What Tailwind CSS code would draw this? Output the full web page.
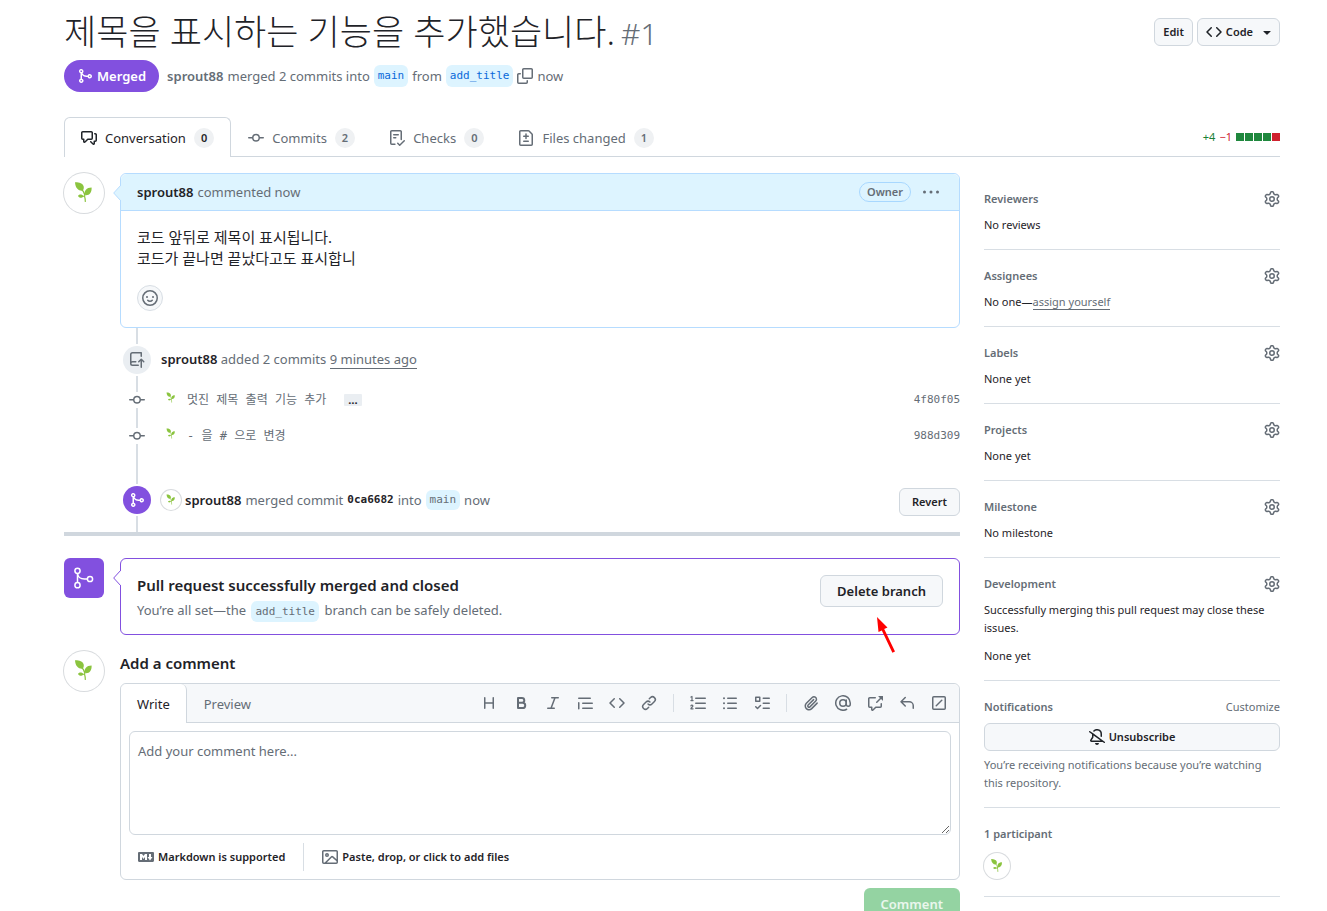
<!DOCTYPE html>
<html lang="ko">
<head>
<meta charset="utf-8">
<meta name="viewport" content="width=device-width, initial-scale=1">
<title>제목을 표시하는 기능을 추가했습니다. #1</title>
<script src="https://cdn.jsdelivr.net/npm/@tailwindcss/browser@4"></script>
</head>
<body class="h-screen overflow-hidden bg-white font-['Noto_Sans','Noto_Sans_CJK_KR',sans-serif] text-[13px] leading-5 text-[#1f2328]">

<!-- Icon sprite -->
<svg class="hidden" aria-hidden="true">
  <symbol id="merge" viewBox="0 0 16 16"><path d="M5.45 5.154A4.25 4.25 0 0 0 9.25 7.5h1.378a2.251 2.251 0 1 1 0 1.5H9.25A5.734 5.734 0 0 1 5 7.123v3.505a2.25 2.25 0 1 1-1.5 0V5.372a2.25 2.25 0 1 1 1.95-.218ZM4.25 13.5a.75.75 0 1 0 0-1.5.75.75 0 0 0 0 1.5Zm8.5-4.5a.75.75 0 1 0 0-1.5.75.75 0 0 0 0 1.5ZM5 3.25a.75.75 0 1 0 0 .005V3.25Z"/></symbol>
  <symbol id="discussion" viewBox="0 0 16 16"><path d="M1.75 1h8.5c.966 0 1.75.784 1.75 1.75v5.5A1.75 1.75 0 0 1 10.25 10H7.061l-2.574 2.573A1.458 1.458 0 0 1 2 11.543V10h-.25A1.75 1.75 0 0 1 0 8.25v-5.5C0 1.784.784 1 1.75 1ZM1.5 2.75v5.5c0 .138.112.25.25.25h1a.75.75 0 0 1 .75.75v2.19l2.72-2.72a.749.749 0 0 1 .53-.22h3.5a.25.25 0 0 0 .25-.25v-5.5a.25.25 0 0 0-.25-.25h-8.5a.25.25 0 0 0-.25.25Zm13 2a.25.25 0 0 0-.25-.25h-.5a.75.75 0 0 1 0-1.5h.5c.966 0 1.75.784 1.75 1.75v5.5A1.75 1.75 0 0 1 14.25 12H14v1.543a1.458 1.458 0 0 1-2.487 1.03L9.22 12.28a.749.749 0 0 1 .326-1.275.749.749 0 0 1 .734.215l2.22 2.22v-2.19a.75.75 0 0 1 .75-.75h1a.25.25 0 0 0 .25-.25Z"/></symbol>
  <symbol id="commit" viewBox="0 0 16 16"><path d="M11.93 8.5a4.002 4.002 0 0 1-7.86 0H.75a.75.75 0 0 1 0-1.5h3.32a4.002 4.002 0 0 1 7.86 0h3.32a.75.75 0 0 1 0 1.5Zm-1.43-.75a2.5 2.5 0 1 0-5 0 2.5 2.5 0 0 0 5 0Z"/></symbol>
  <symbol id="checklist" viewBox="0 0 16 16"><path d="M2.5 1.75v11.5c0 .138.112.25.25.25h3.17a.75.75 0 0 1 0 1.5H2.75A1.75 1.75 0 0 1 1 13.25V1.75C1 .784 1.784 0 2.75 0h8.5C12.216 0 13 .784 13 1.75v7.736a.75.75 0 0 1-1.5 0V1.75a.25.25 0 0 0-.25-.25h-8.5a.25.25 0 0 0-.25.25Zm13.274 9.537v-.001l-4.557 4.45a.75.75 0 0 1-1.055-.008l-1.943-1.95a.75.75 0 0 1 1.062-1.058l1.419 1.425 4.026-3.932a.75.75 0 1 1 1.048 1.074ZM4.75 4h4.5a.75.75 0 0 1 0 1.5h-4.5a.75.75 0 0 1 0-1.5ZM4 7.75A.75.75 0 0 1 4.75 7h2a.75.75 0 0 1 0 1.5h-2A.75.75 0 0 1 4 7.75Z"/></symbol>
  <symbol id="filediff" viewBox="0 0 16 16"><path d="M1 1.75C1 .784 1.784 0 2.75 0h7.586c.464 0 .909.184 1.237.513l2.914 2.914c.329.328.513.773.513 1.237v9.586A1.75 1.75 0 0 1 13.25 16H2.75A1.75 1.75 0 0 1 1 14.25Zm1.75-.25a.25.25 0 0 0-.25.25v12.5c0 .138.112.25.25.25h10.5a.25.25 0 0 0 .25-.25V4.664a.25.25 0 0 0-.073-.177l-2.914-2.914a.25.25 0 0 0-.177-.073ZM8 3.25a.75.75 0 0 1 .75.75v1.5h1.5a.75.75 0 0 1 0 1.5h-1.5v1.5a.75.75 0 0 1-1.5 0V7h-1.5a.75.75 0 0 1 0-1.5h1.5V4A.75.75 0 0 1 8 3.25Zm-3 8a.75.75 0 0 1 .75-.75h4.5a.75.75 0 0 1 0 1.5h-4.5a.75.75 0 0 1-.75-.75Z"/></symbol>
  <symbol id="code" viewBox="0 0 16 16"><path d="m11.28 3.22 4.25 4.25a.75.75 0 0 1 0 1.06l-4.25 4.25a.749.749 0 0 1-1.275-.326.749.749 0 0 1 .215-.734L13.94 8l-3.72-3.72a.749.749 0 0 1 .326-1.275.749.749 0 0 1 .734.215Zm-6.56 0a.751.751 0 0 1 1.042.018.751.751 0 0 1 .018 1.042L2.06 8l3.72 3.72a.749.749 0 0 1-.326 1.275.749.749 0 0 1-.734-.215L.47 8.53a.75.75 0 0 1 0-1.06Z"/></symbol>
  <symbol id="caret" viewBox="0 0 16 16"><path d="m4.427 7.427 3.396 3.396a.25.25 0 0 0 .354 0l3.396-3.396A.25.25 0 0 0 11.396 7H4.604a.25.25 0 0 0-.177.427Z"/></symbol>
  <symbol id="copy" viewBox="0 0 16 16"><path d="M0 6.75C0 5.784.784 5 1.75 5h1.5a.75.75 0 0 1 0 1.5h-1.5a.25.25 0 0 0-.25.25v7.5c0 .138.112.25.25.25h7.5a.25.25 0 0 0 .25-.25v-1.5a.75.75 0 0 1 1.5 0v1.5A1.75 1.75 0 0 1 9.25 16h-7.5A1.75 1.75 0 0 1 0 14.25ZM5 1.75C5 .784 5.784 0 6.75 0h7.5C15.216 0 16 .784 16 1.75v7.5A1.75 1.75 0 0 1 14.25 11h-7.5A1.75 1.75 0 0 1 5 9.25Zm1.75-.25a.25.25 0 0 0-.25.25v7.5c0 .138.112.25.25.25h7.5a.25.25 0 0 0 .25-.25v-7.5a.25.25 0 0 0-.25-.25Z"/></symbol>
  <symbol id="dots" viewBox="0 0 16 16"><circle cx="1.5" cy="8" r="1.5"/><circle cx="8" cy="8" r="1.5"/><circle cx="14.5" cy="8" r="1.5"/></symbol>
  <symbol id="smiley" viewBox="0 0 16 16"><circle cx="8" cy="8" r="7.25" fill="none" stroke="currentColor" stroke-width="1.5"/><circle cx="5" cy="7" r="1"/><circle cx="11" cy="7" r="1"/><path d="M5.75 10.3c1 1.25 3.5 1.25 4.5 0" fill="none" stroke="currentColor" stroke-width="1.5" stroke-linecap="round"/></symbol>
  <symbol id="push" viewBox="0 0 16 16"><path d="M1 2.5A2.5 2.5 0 0 1 3.5 0h8.75a.75.75 0 0 1 .75.75v3.5a.75.75 0 0 1-1.5 0V1.5h-8a1 1 0 0 0-1 1v6.708A2.493 2.493 0 0 1 3.5 9h3.25a.75.75 0 0 1 0 1.5H3.5a1 1 0 0 0 0 2h5.75a.75.75 0 0 1 0 1.5H3.5A2.5 2.5 0 0 1 1 11.5Zm13.23 7.79h-.001l-1.224-1.224v6.184a.75.75 0 0 1-1.5 0V9.066L10.28 10.29a.75.75 0 0 1-1.06-1.061l2.505-2.504a.75.75 0 0 1 1.06 0L15.29 9.23a.751.751 0 0 1-.018 1.042.751.751 0 0 1-1.042.018Z"/></symbol>
  <symbol id="gear" viewBox="0 0 16 16"><path d="M8 0a8.2 8.2 0 0 1 .701.031C9.444.095 9.99.645 10.16 1.29l.288 1.107c.018.066.079.158.212.224.231.114.454.243.668.386.123.082.233.09.299.071l1.103-.303c.644-.176 1.392.021 1.82.63.27.385.506.792.704 1.218.315.675.111 1.422-.364 1.891l-.814.806c-.049.048-.098.147-.088.294.016.257.016.515 0 .772-.01.147.038.246.088.294l.814.806c.475.469.679 1.216.364 1.891a7.977 7.977 0 0 1-.704 1.217c-.428.61-1.176.807-1.82.63l-1.102-.302c-.067-.019-.177-.011-.3.071a5.909 5.909 0 0 1-.668.386c-.133.066-.194.158-.211.224l-.29 1.106c-.168.646-.715 1.196-1.458 1.26a8.006 8.006 0 0 1-1.402 0c-.743-.064-1.289-.614-1.458-1.26l-.289-1.106c-.018-.066-.079-.158-.212-.224a5.738 5.738 0 0 1-.668-.386c-.123-.082-.233-.09-.299-.071l-1.103.303c-.644.176-1.392-.021-1.82-.63a8.12 8.12 0 0 1-.704-1.218c-.315-.675-.111-1.422.363-1.891l.815-.806c.05-.048.098-.147.088-.294a6.214 6.214 0 0 1 0-.772c.01-.147-.038-.246-.088-.294l-.815-.806C.635 6.045.431 5.298.746 4.623a7.92 7.92 0 0 1 .704-1.217c.428-.61 1.176-.807 1.82-.63l1.102.302c.067.019.177.011.3-.071.214-.143.437-.272.668-.386.133-.066.194-.158.211-.224l.29-1.106C6.009.645 6.556.095 7.299.03 7.53.01 7.764 0 8 0Zm-.571 1.525c-.036.003-.108.036-.137.146l-.289 1.105c-.147.561-.549.967-.998 1.189-.173.086-.34.183-.5.29-.417.278-.97.423-1.529.27l-1.103-.303c-.109-.03-.175.016-.195.045-.22.312-.412.644-.573.99-.014.031-.021.11.059.19l.815.806c.411.406.562.957.53 1.456a4.709 4.709 0 0 0 0 .582c.032.499-.119 1.05-.53 1.456l-.815.806c-.081.08-.073.159-.059.19.162.346.353.677.573.989.02.03.085.076.195.046l1.102-.303c.56-.153 1.113-.008 1.53.27.161.107.328.204.501.29.447.222.85.629.997 1.189l.289 1.105c.029.109.101.143.137.146a6.6 6.6 0 0 0 1.142 0c.036-.003.108-.036.137-.146l.289-1.105c.147-.561.549-.967.998-1.189.173-.086.34-.183.5-.29.417-.278.97-.423 1.529-.27l1.103.303c.109.029.175-.016.195-.045.22-.313.411-.644.573-.99.014-.031.021-.11-.059-.19l-.815-.806c-.411-.406-.562-.957-.53-1.456a4.709 4.709 0 0 0 0-.582c-.032-.499.119-1.05.53-1.456l.815-.806c.081-.08.073-.159.059-.19a6.464 6.464 0 0 0-.573-.989c-.02-.03-.085-.076-.195-.046l-1.102.303c-.56.153-1.113.008-1.53-.27a4.44 4.44 0 0 0-.501-.29c-.447-.222-.85-.629-.997-1.189l-.289-1.105c-.029-.11-.101-.143-.137-.146a6.6 6.6 0 0 0-1.142 0ZM11 8a3 3 0 1 1-6 0 3 3 0 0 1 6 0ZM9.5 8a1.5 1.5 0 1 0-3.001.001A1.5 1.5 0 0 0 9.5 8Z"/></symbol>
  <symbol id="heading" viewBox="0 0 16 16"><path d="M3.75 2.75v10.5M12.25 2.75v10.5M3.75 8h8.5" fill="none" stroke="currentColor" stroke-width="1.5" stroke-linecap="round"/></symbol>
  <symbol id="bold" viewBox="0 0 16 16"><path d="M5 3h3.9a2.3 2.3 0 0 1 0 4.75H5Zm0 4.75h4.6a2.6 2.6 0 0 1 0 5.25H5Z" fill="none" stroke="currentColor" stroke-width="2" stroke-linejoin="round"/></symbol>
  <symbol id="italic" viewBox="0 0 16 16"><path d="M6.75 2.75h6.5M2.75 13.25h6.5M10 2.75 6 13.25" fill="none" stroke="currentColor" stroke-width="1.5" stroke-linecap="round"/></symbol>
  <symbol id="quote" viewBox="0 0 16 16"><path d="M1.75 3.25h11.5M5.75 8.25h9.5M5.75 13.25h9.5M1.75 7.75v6" fill="none" stroke="currentColor" stroke-width="1.5" stroke-linecap="round"/></symbol>
  <symbol id="link" viewBox="0 0 16 16"><path d="m7.775 3.275 1.25-1.25a3.5 3.5 0 1 1 4.95 4.95l-2.5 2.5a3.5 3.5 0 0 1-4.95 0 .751.751 0 0 1 .018-1.042.751.751 0 0 1 1.042-.018 1.998 1.998 0 0 0 2.83 0l2.5-2.5a2.002 2.002 0 0 0-2.83-2.83l-1.25 1.25a.751.751 0 0 1-1.042-.018.751.751 0 0 1-.018-1.042Zm-4.69 9.64a1.998 1.998 0 0 0 2.83 0l1.25-1.25a.751.751 0 0 1 1.042.018.751.751 0 0 1 .018 1.042l-1.25 1.25a3.5 3.5 0 1 1-4.95-4.95l2.5-2.5a3.5 3.5 0 0 1 4.95 0 .751.751 0 0 1-.018 1.042.751.751 0 0 1-1.042.018 1.998 1.998 0 0 0-2.83 0l-2.5 2.5a1.998 1.998 0 0 0 0 2.83Z"/></symbol>
  <symbol id="ordered" viewBox="0 0 16 16"><path d="M5.75 3.25h9.5M5.75 8.25h9.5M5.75 13.25h9.5" fill="none" stroke="currentColor" stroke-width="1.5" stroke-linecap="round"/><path d="M1 2.1 2 1.500v4M.9 5.600h2.200M.9 10.800c.3-1.100 2-.9 2 .1 0 .9-2 1.800-2 2.900h2.200" fill="none" stroke="currentColor" stroke-width="1.200" stroke-linecap="round" stroke-linejoin="round"/></symbol>
  <symbol id="unordered" viewBox="0 0 16 16"><path d="M5.75 3.25h8.5M5.75 8.25h8.5M5.75 13.25h8.5" fill="none" stroke="currentColor" stroke-width="1.5" stroke-linecap="round"/><circle cx="2" cy="3.25" r="1"/><circle cx="2" cy="8.25" r="1"/><circle cx="2" cy="13.25" r="1"/></symbol>
  <symbol id="tasks" viewBox="0 0 16 16"><path d="M9.25 3.25h6M9.25 8.25h6M9.25 13.25h6M1.75 2.25h4v4h-4ZM1.75 11.75l1.75 1.75 3-3" fill="none" stroke="currentColor" stroke-width="1.5" stroke-linecap="round" stroke-linejoin="round"/></symbol>
  <symbol id="clip" viewBox="0 0 16 16"><path d="M12.212 3.02a1.753 1.753 0 0 0-2.478.003l-5.83 5.83a3.007 3.007 0 0 0-.88 2.127c0 .795.315 1.551.88 2.116.567.567 1.333.89 2.126.89.79 0 1.548-.321 2.116-.89l5.48-5.48a.75.75 0 0 1 1.061 1.06l-5.48 5.48a4.492 4.492 0 0 1-3.177 1.33c-1.2 0-2.345-.487-3.187-1.33a4.483 4.483 0 0 1-1.32-3.177c0-1.195.475-2.341 1.32-3.186l5.83-5.83a3.25 3.25 0 0 1 5.553 2.297c0 .863-.343 1.691-.953 2.301L7.439 12.39c-.375.377-.884.59-1.416.593a1.998 1.998 0 0 1-1.412-.593 1.992 1.992 0 0 1 0-2.828l5.48-5.48a.751.751 0 0 1 1.042.018.751.751 0 0 1 .018 1.042l-5.48 5.48a.492.492 0 0 0 0 .707.499.499 0 0 0 .352.154.51.51 0 0 0 .356-.154l5.833-5.827a1.755 1.755 0 0 0 0-2.481Z"/></symbol>
  <symbol id="mention" viewBox="0 0 16 16"><g fill="none" stroke="currentColor" stroke-width="1.5" stroke-linecap="round"><circle cx="8" cy="8" r="3.25"/><path d="M11.25 5v4.25a2 2 0 0 0 4 0V8a7.25 7.25 0 1 0-3.6 6.27"/></g></symbol>
  <symbol id="crossref" viewBox="0 0 16 16"><path d="M2.75 3.5a.25.25 0 0 0-.25.25v7.5c0 .138.112.25.25.25h2a.75.75 0 0 1 .75.75v2.19l2.72-2.72a.749.749 0 0 1 .53-.22h4.5a.25.25 0 0 0 .25-.25v-2.5a.75.75 0 0 1 1.5 0v2.5A1.75 1.75 0 0 1 13.25 13H9.06l-2.573 2.573A1.458 1.458 0 0 1 4 14.543V13H2.75A1.75 1.75 0 0 1 1 11.25v-7.5C1 2.784 1.784 2 2.75 2h5.5a.75.75 0 0 1 0 1.5ZM16 1.25v4.146a.25.25 0 0 1-.427.177L14.03 4.03l-3.75 3.75a.749.749 0 0 1-1.275-.326.749.749 0 0 1 .215-.734l3.75-3.75-1.543-1.543A.25.25 0 0 1 11.604 1h4.146a.25.25 0 0 1 .25.25Z"/></symbol>
  <symbol id="reply" viewBox="0 0 16 16"><path d="M6.78 1.97a.75.75 0 0 1 0 1.06L3.81 6h6.44A4.75 4.75 0 0 1 15 10.75v2.5a.75.75 0 0 1-1.5 0v-2.5a3.25 3.25 0 0 0-3.25-3.25H3.81l2.97 2.97a.749.749 0 0 1-.326 1.275.749.749 0 0 1-.734-.215L1.47 7.28a.75.75 0 0 1 0-1.06l4.25-4.25a.75.75 0 0 1 1.06 0Z"/></symbol>
  <symbol id="slash" viewBox="0 0 16 16"><g fill="none" stroke="currentColor" stroke-width="1.5" stroke-linecap="round"><rect x="1.75" y="1.75" width="12.5" height="12.5" rx="1"/><path d="m5.25 10.75 5.5-5.5"/></g></symbol>
  <symbol id="markdown" viewBox="0 0 16 16"><path d="M14.85 3c.63 0 1.15.52 1.14 1.15v7.7c0 .63-.51 1.15-1.15 1.15H1.15C.52 13 0 12.48 0 11.84V4.15C0 3.52.52 3 1.15 3ZM9 11V5H7L5.5 7 4 5H2v6h2V8l1.5 1.92L7 8v3Zm2.99.5L14.5 8H13V5h-2v3H9.5Z"/></symbol>
  <symbol id="image" viewBox="0 0 16 16"><path d="M16 13.25A1.75 1.75 0 0 1 14.25 15H1.75A1.75 1.75 0 0 1 0 13.25V2.75C0 1.784.784 1 1.75 1h12.5c.966 0 1.75.784 1.75 1.75ZM1.75 2.5a.25.25 0 0 0-.25.25v10.5c0 .138.112.25.25.25h.94l.03-.03 6.077-6.078a1.75 1.75 0 0 1 2.412-.06L14.5 10.31V2.75a.25.25 0 0 0-.25-.25Zm12.5 11a.25.25 0 0 0 .25-.25v-.917l-4.298-3.889a.25.25 0 0 0-.344.009L4.81 13.5ZM7 6a2 2 0 1 1-3.999.001A2 2 0 0 1 7 6ZM5.5 6a.5.5 0 1 0-1 0 .5.5 0 0 0 1 0Z"/></symbol>
  <symbol id="bell" viewBox="0 0 16 16"><path d="m4.182 4.31.016.011 10.104 7.316.013.01 1.375.996a.75.75 0 1 1-.88 1.214L13.626 13H2.518a1.516 1.516 0 0 1-1.263-2.36l1.703-2.554A.255.255 0 0 0 3 7.947V5.305L.31 3.357a.75.75 0 1 1 .88-1.214Zm7.373 7.19L4.5 6.391v1.556c0 .346-.102.683-.294.97l-1.703 2.556a.017.017 0 0 0-.003.01c0 .005.002.009.005.012l.006.004.007.001ZM8 1.5c-.997 0-1.895.416-2.534 1.086A.75.75 0 1 1 4.38 1.55 5 5 0 0 1 13 5v2.373a.75.75 0 0 1-1.5 0V5A3.5 3.5 0 0 0 8 1.5ZM8 16a2 2 0 0 1-1.985-1.75c-.017-.137.097-.25.235-.25h3.5c.138 0 .252.113.235.25A2 2 0 0 1 8 16Z"/></symbol>
  <symbol id="sprout" viewBox="0 0 40 40"><path fill="#8bc43f" d="M11 9.200c3.400-.2 8 1 8.700 4.200.4 1.900-.3 3.400-1 4.200-4.200.4-7.300-2.400-7.700-8.400ZM27.600 14.400c.4 4.600-1.900 8.100-6.200 7.700-1.800-4.500 1.200-7.600 6.200-7.700ZM14 23c1.200-1.800 4-2 5.500.2-1.600 2.300-4.300 2-5.500-.2Z"/><path fill="none" stroke="#8bc43f" stroke-width="1.200" stroke-linecap="round" d="M17.500 16c1.700 1.800 3 4 3.400 6.500M24 18c-2 1.500-3.200 3-3.500 5 .5 1.800.8 3.400.8 5.400M18.500 23l2 .5"/></symbol>
</svg>

<div class="flex flex-col pl-16 pr-[47px] pt-3">
  <!-- Title -->
  <header>
    <div class="flex h-10 items-start justify-between">
      <h1 class="text-[35px] font-light leading-10">제목을 표시하는 기능을 추가했습니다.<span class="ml-1.5 text-[30px] text-[#656d76]">#1</span></h1>
      <div class="mt-1.5 flex gap-1 text-[11px] font-semibold">
        <button class="h-7 rounded-md border border-[#d0d7de] bg-[#f6f8fa] px-2">Edit</button>
        <button class="flex h-7 items-center gap-1 rounded-md border border-[#d0d7de] bg-[#f6f8fa] pl-2 pr-1"><svg class="size-4 fill-current"><use href="#code"/></svg>Code<svg class="ml-0.5 size-4 fill-current"><use href="#caret"/></svg></button>
      </div>
    </div>
    <div class="mt-2 flex items-center text-[#656d76]">
      <span class="mr-2 flex h-8 items-center gap-1 rounded-full bg-[#8250df] px-[13px] font-semibold text-white"><svg class="size-4 fill-current"><use href="#merge"/></svg>Merged</span>
      <a href="#" class="mr-1 font-semibold">sprout88</a>merged 2 commits into
      <a href="#" class="mx-1 rounded-md bg-[#ddf4ff] px-1 font-['DejaVu_Sans_Mono',monospace] text-[11px] leading-[22px] text-[#0969da]">main</a>from
      <a href="#" class="mx-1 rounded-md bg-[#ddf4ff] px-1 font-['DejaVu_Sans_Mono',monospace] text-[11px] leading-[22px] text-[#0969da]">add_title</a>
      <button aria-label="Copy" class="mr-1"><svg class="size-4 fill-current"><use href="#copy"/></svg></button>now
    </div>
  </header>

  <!-- Tabs -->
  <nav class="mt-[25px] flex items-end text-[#656d76]">
    <a href="#" class="flex h-10 items-center gap-2 rounded-t-md border border-b-0 border-[#d0d7de] px-4 pt-px text-[#1f2328]"><svg class="size-4 fill-current"><use href="#discussion"/></svg>Conversation<span class="rounded-full bg-[#eff1f3] px-[7px] text-[11px] font-semibold leading-5">0</span></a>
    <div class="flex h-10 flex-1 items-center border-b border-[#d0d7de] pt-0.5">
      <a href="#" class="ml-px flex items-center gap-2 px-4"><svg class="size-4 fill-current"><use href="#commit"/></svg>Commits<span class="rounded-full bg-[#eff1f3] px-[7px] text-[11px] font-semibold leading-5">2</span></a>
      <a href="#" class="ml-0.5 flex items-center gap-2 px-4"><svg class="size-4 fill-current"><use href="#checklist"/></svg>Checks<span class="rounded-full bg-[#eff1f3] px-[7px] text-[11px] font-semibold leading-5">0</span></a>
      <a href="#" class="ml-0.5 flex items-center gap-2 px-4"><svg class="size-4 fill-current"><use href="#filediff"/></svg>Files changed<span class="rounded-full bg-[#eff1f3] px-[7px] text-[11px] font-semibold leading-5">1</span></a>
      <div class="ml-auto flex items-center gap-1 pb-0.5 text-[11px]"><span class="text-[#1a7f37]">+4</span><span class="text-[#cf222e]">−1</span>
        <span class="flex gap-px"><i class="size-2 bg-[#1f883d]"></i><i class="size-2 bg-[#1f883d]"></i><i class="size-2 bg-[#1f883d]"></i><i class="size-2 bg-[#1f883d]"></i><i class="size-2 bg-[#cf222e]"></i></span>
      </div>
    </div>
  </nav>

  <div class="flex gap-6 pt-4">
    <main class="min-w-0 flex-1">
      <!-- Opening comment -->
      <div class="flex gap-4">
        <svg class="size-10 shrink-0 rounded-full ring-1 ring-[#d8dbde]"><use href="#sprout"/></svg>
        <article class="relative flex-1 rounded-md border border-[#b6dcff]">
          <svg class="absolute -left-2 top-[11px] h-4 w-2" viewBox="0 0 8 16"><path d="M8 0 .7 8 8 16" fill="#ddf4ff" stroke="#b6dcff"/></svg>
          <div class="flex h-[37px] items-center rounded-t-md border-b border-[#b6dcff] bg-[#ddf4ff] pl-4 pr-5 text-[#656d76]">
            <a href="#" class="mr-1 font-semibold text-[#1f2328]">sprout88</a>commented now
            <span class="ml-auto rounded-full border border-[#a8d8ff] px-[7px] text-[11px] font-semibold leading-[18px]">Owner</span>
            <button aria-label="Comment options" class="ml-3"><svg class="size-4 fill-current"><use href="#dots"/></svg></button>
          </div>
          <div class="p-4">
            <p class="text-[15px] leading-[21px]">코드 앞뒤로 제목이 표시됩니다.<br>코드가 끝나면 끝났다고도 표시합니</p>
            <button aria-label="Add reaction" class="mt-4 flex size-[26px] items-center justify-center rounded-full border border-[#d8dee4] bg-[#f6f8fa] text-[#656d76]"><svg class="size-4 fill-current"><use href="#smiley"/></svg></button>
          </div>
        </article>
      </div>

      <!-- Timeline -->
      <section class="ml-[59px] text-[#656d76]">
        <div class="flex gap-2.5">
          <div class="flex w-7 flex-col items-center"><i class="mb-0.5 h-4 w-0.5 bg-[#d8dee4]"></i><span class="mb-0.5 flex size-7 items-center justify-center rounded-full bg-[#eaeef2]"><svg class="size-4 fill-current"><use href="#push"/></svg></span></div>
          <p class="pt-[21px]"><a href="#" class="font-semibold text-[#1f2328]">sprout88</a> added 2 commits <a href="#" class="border-b border-[#656d76]">9 minutes ago</a></p>
        </div>
        <div class="flex items-center gap-2.5">
          <div class="flex w-7 flex-col items-center"><i class="h-4 w-0.5 bg-[#d8dee4]"></i><svg class="size-4 fill-current"><use href="#commit"/></svg><i class="h-4 w-0.5 bg-[#d8dee4]"></i></div>
          <svg class="mb-1 size-5"><use href="#sprout"/></svg>
          <a href="#" class="-ml-1 font-['DejaVu_Sans_Mono','Noto_Sans_CJK_KR',monospace] text-xs">멋진 제목 출력 기능 추가</a>
          <button aria-label="Show description" class="ml-2 flex h-3 items-center rounded-[1px] bg-[#eaeef2] px-1 text-[11px] font-bold leading-3 text-[#1f2328]">…</button>
          <a href="#" class="ml-auto font-['DejaVu_Sans_Mono',monospace] text-[11px]">4f80f05</a>
        </div>
        <div class="flex items-center gap-2.5">
          <div class="flex w-7 flex-col items-center"><i class="h-1 w-0.5 bg-[#d8dee4]"></i><svg class="size-4 fill-current"><use href="#commit"/></svg><i class="h-1 w-0.5 bg-[#d8dee4]"></i></div>
          <svg class="mb-1 size-5"><use href="#sprout"/></svg>
          <a href="#" class="-ml-1 font-['DejaVu_Sans_Mono','Noto_Sans_CJK_KR',monospace] text-xs">- 을 # 으로 변경</a>
          <a href="#" class="ml-auto font-['DejaVu_Sans_Mono',monospace] text-[11px]">988d309</a>
        </div>
        <div class="flex gap-2.5">
          <div class="flex w-7 flex-col items-center"><i class="mb-0.5 h-9 w-0.5 bg-[#d8dee4]"></i><span class="mb-0.5 flex size-7 items-center justify-center rounded-full bg-[#8250df] text-white"><svg class="size-4 fill-current"><use href="#merge"/></svg></span><i class="h-4 w-0.5 bg-[#d8dee4]"></i></div>
          <div class="mt-9 flex h-8 flex-1 items-center">
            <svg class="mr-1 size-5 rounded-full ring-1 ring-[#d8dbde]"><use href="#sprout"/></svg>
            <a href="#" class="mr-1 font-semibold text-[#1f2328]">sprout88</a>merged commit
            <a href="#" class="mx-1 font-['DejaVu_Sans_Mono',monospace] text-[11px] font-bold text-[#1f2328]">0ca6682</a>into
            <a href="#" class="mx-1 rounded-md bg-[#ddf4ff] px-1 font-['DejaVu_Sans_Mono',monospace] text-[11px] leading-5 text-[#656d76]">main</a>now
            <button class="mt-1 ml-auto h-7 rounded-md border border-[#d0d7de] bg-[#f6f8fa] px-3 text-[11px] font-semibold text-[#1f2328]">Revert</button>
          </div>
        </div>
      </section>
      <hr class="h-1 border-0 bg-[#d0d7de]">

      <!-- Merge status -->
      <div class="mt-[22px] flex gap-4">
        <span class="flex size-10 shrink-0 items-center justify-center rounded-md bg-[#8250df] text-white"><svg class="size-6 fill-none stroke-current stroke-[1.5]" viewBox="0 0 24 24"><circle cx="5.500" cy="4.800" r="2.600"/><circle cx="5.500" cy="19.200" r="2.600"/><circle cx="18" cy="13" r="2.600"/><path d="M5.500 7.400v9.200M5.500 7.500c.5 3.500 3.500 5.500 7 5.500h2.900"/></svg></span>
        <section class="relative flex h-[77px] flex-1 items-start justify-between rounded-md border border-[#8250df] px-4 pt-4">
          <svg class="absolute -left-2 top-[11px] h-4 w-2" viewBox="0 0 8 16"><path d="M8 0 .7 8 8 16" fill="#fff" stroke="#8250df"/></svg>
          <div>
            <h2 class="text-[15px] font-semibold leading-5">Pull request successfully merged and closed</h2>
            <p class="mt-[5px] text-[#656d76]">You’re all set—the <a href="#" class="mx-0.5 rounded-md bg-[#ddf4ff] p-1 font-['DejaVu_Sans_Mono',monospace] text-[11px]">add_title</a> branch can be safely deleted.</p>
          </div>
          <button class="h-8 rounded-md border border-[#d0d7de] bg-[#f6f8fa] px-4 font-semibold">Delete branch</button>
          <svg class="absolute right-[63px] top-[57px] h-[38px] w-5" viewBox="0 0 20 38"><path d="m1 1 10.500 10.500-3.300 1.600L19 35.500l-2.600 1.300L5.800 14.500l-3.300 1.600Z" fill="#f00"/></svg>
        </section>
      </div>

      <!-- New comment -->
      <div class="mt-4 flex gap-4">
        <svg class="size-10 shrink-0 rounded-full ring-1 ring-[#d8dbde]"><use href="#sprout"/></svg>
        <form class="min-w-0 flex-1">
          <label for="comment" class="block text-[15px] font-semibold leading-6">Add a comment</label>
          <div class="mt-2 rounded-md border border-[#d0d7de]">
            <div class="flex h-[39px] rounded-t-md bg-[#f6f8fa] text-[#656d76]">
              <button type="button" class="rounded-t-md border-r border-[#d0d7de] bg-white px-4 text-[#1f2328]">Write</button>
              <div class="flex flex-1 items-center border-b border-[#d0d7de] pr-1">
                <button type="button" class="mr-auto px-[17px] pt-px">Preview</button>
                <button type="button" aria-label="Heading" class="flex w-8 justify-center"><svg class="size-4 fill-current"><use href="#heading"/></svg></button>
                <button type="button" aria-label="Bold" class="flex w-8 justify-center"><svg class="size-4 fill-current"><use href="#bold"/></svg></button>
                <button type="button" aria-label="Italic" class="flex w-8 justify-center"><svg class="size-4 fill-current"><use href="#italic"/></svg></button>
                <button type="button" aria-label="Quote" class="flex w-8 justify-center"><svg class="size-4 fill-current"><use href="#quote"/></svg></button>
                <button type="button" aria-label="Code" class="flex w-8 justify-center"><svg class="size-4 fill-current"><use href="#code"/></svg></button>
                <button type="button" aria-label="Link" class="flex w-8 justify-center"><svg class="size-4 fill-current"><use href="#link"/></svg></button>
                <i class="mx-2 h-[18px] w-px bg-[#d8dee4]"></i>
                <button type="button" aria-label="Numbered list" class="flex w-8 justify-center"><svg class="size-4 fill-current"><use href="#ordered"/></svg></button>
                <button type="button" aria-label="Bulleted list" class="flex w-8 justify-center"><svg class="size-4 fill-current"><use href="#unordered"/></svg></button>
                <button type="button" aria-label="Task list" class="flex w-8 justify-center"><svg class="size-4 fill-current"><use href="#tasks"/></svg></button>
                <i class="mx-2 h-[18px] w-px bg-[#d8dee4]"></i>
                <button type="button" aria-label="Attach files" class="flex w-8 justify-center"><svg class="size-4 fill-current"><use href="#clip"/></svg></button>
                <button type="button" aria-label="Mention" class="flex w-8 justify-center"><svg class="size-4 fill-current"><use href="#mention"/></svg></button>
                <button type="button" aria-label="Reference" class="flex w-8 justify-center"><svg class="size-4 fill-current"><use href="#crossref"/></svg></button>
                <button type="button" aria-label="Saved replies" class="flex w-8 justify-center"><svg class="size-4 fill-current"><use href="#reply"/></svg></button>
                <button type="button" aria-label="Slash commands" class="flex w-8 justify-center"><svg class="size-4 fill-current"><use href="#slash"/></svg></button>
              </div>
            </div>
            <div class="p-2">
              <textarea id="comment" placeholder="Add your comment here..." class="block h-[104px] w-full resize-y rounded-md border border-[#d0d7de] px-2 py-[9px] placeholder:text-[#656d76]"></textarea>
              <div class="mt-2 flex h-7 items-center text-[11px] font-semibold">
                <a href="#" class="flex items-center gap-1 pl-[9px]"><svg class="size-4 fill-[#656d76]"><use href="#markdown"/></svg>Markdown is supported</a>
                <i class="mx-[18px] h-7 w-px bg-[#d8dee4]"></i>
                <button type="button" class="flex items-center gap-1"><svg class="size-4 fill-[#656d76]"><use href="#image"/></svg>Paste, drop, or click to add files</button>
              </div>
            </div>
          </div>
          <div class="mt-2 flex justify-end"><button type="submit" disabled class="h-8 rounded-md bg-[#94d3a2] px-[17px] font-semibold text-white/80">Comment</button></div>
        </form>
      </div>
    </main>

    <!-- Sidebar -->
    <aside class="w-[296px] shrink-0 text-[11px] leading-[18px]">
      <section class="border-b border-[#d8dee4] pt-[17px] pb-[15px]">
        <div class="flex items-center justify-between font-semibold text-[#656d76]"><h3>Reviewers</h3><button aria-label="Edit reviewers"><svg class="size-4 fill-current"><use href="#gear"/></svg></button></div>
        <p class="mt-2">No reviews</p>
      </section>
      <section class="border-b border-[#d8dee4] pt-[17px] pb-[15px]">
        <div class="flex items-center justify-between font-semibold text-[#656d76]"><h3>Assignees</h3><button aria-label="Edit assignees"><svg class="size-4 fill-current"><use href="#gear"/></svg></button></div>
        <p class="mt-2">No one—<a href="#" class="border-b border-[#656d76] text-[#656d76]">assign yourself</a></p>
      </section>
      <section class="border-b border-[#d8dee4] pt-[17px] pb-[15px]">
        <div class="flex items-center justify-between font-semibold text-[#656d76]"><h3>Labels</h3><button aria-label="Edit labels"><svg class="size-4 fill-current"><use href="#gear"/></svg></button></div>
        <p class="mt-2">None yet</p>
      </section>
      <section class="border-b border-[#d8dee4] pt-[17px] pb-[15px]">
        <div class="flex items-center justify-between font-semibold text-[#656d76]"><h3>Projects</h3><button aria-label="Edit projects"><svg class="size-4 fill-current"><use href="#gear"/></svg></button></div>
        <p class="mt-2">None yet</p>
      </section>
      <section class="border-b border-[#d8dee4] pt-[17px] pb-[15px]">
        <div class="flex items-center justify-between font-semibold text-[#656d76]"><h3>Milestone</h3><button aria-label="Edit milestone"><svg class="size-4 fill-current"><use href="#gear"/></svg></button></div>
        <p class="mt-2">No milestone</p>
      </section>
      <section class="border-b border-[#d8dee4] pt-[17px] pb-[15px]">
        <div class="flex items-center justify-between font-semibold text-[#656d76]"><h3>Development</h3><button aria-label="Edit development"><svg class="size-4 fill-current"><use href="#gear"/></svg></button></div>
        <p class="mt-2">Successfully merging this pull request may close these issues.</p>
        <p class="mt-2.5">None yet</p>
      </section>
      <section class="border-b border-[#d8dee4] pt-[17px] pb-[15px] text-[#656d76]">
        <div class="flex items-center justify-between"><h3 class="font-semibold">Notifications</h3><a href="#">Customize</a></div>
        <button class="mt-[7px] flex h-7 w-full items-center justify-center gap-1 rounded-md border border-[#d0d7de] bg-[#f6f8fa] font-semibold text-[#1f2328]"><svg class="size-4 fill-current"><use href="#bell"/></svg>Unsubscribe</button>
        <p class="mt-[5px]">You’re receiving notifications because you’re watching this repository.</p>
      </section>
      <section class="border-b border-[#d8dee4] pt-[17px] pb-[15px]">
        <h3 class="font-semibold text-[#656d76]">1 participant</h3>
        <a href="#" aria-label="sprout88" class="mt-2.5 block size-7"><svg class="size-[26px] rounded-full ring-1 ring-[#d8dbde]"><use href="#sprout"/></svg></a>
      </section>
    </aside>
  </div>
</div>
</body>
</html>
